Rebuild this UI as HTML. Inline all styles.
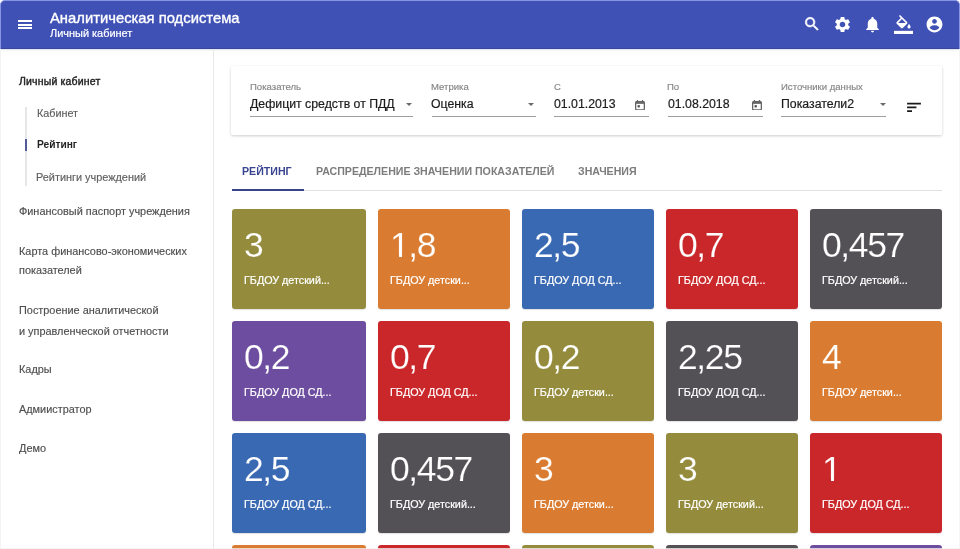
<!DOCTYPE html>
<html><head><meta charset="utf-8"><style>
*{margin:0;padding:0;box-sizing:border-box}
html,body{width:960px;height:549px;overflow:hidden;background:#fff;font-family:"Liberation Sans",sans-serif}
.a{position:absolute;white-space:nowrap;line-height:1;will-change:transform}
#hdr{position:absolute;left:0;top:0;width:960px;height:49px;background:#3f51b5;border:1px solid #8595e2;border-bottom:none;border-radius:5px 5px 0 0;box-shadow:0 1px 0 #e4e6f4,0 2px 2px rgba(0,0,0,.05)}
#hdr:after{content:'';position:absolute;left:0;right:0;bottom:0;height:1px;background:#38479a}
#side{position:absolute;left:0;top:49px;width:213.5px;height:500px;border-right:1px solid #e8e8e8}
.card{position:absolute;height:100px;border-radius:3px;box-shadow:0 1px 1px rgba(0,0,0,.12)}
.ol{background:#948c3c}.or{background:#d97b30}.bl{background:#3a69b3}.rd{background:#c9272a}.gy{background:#535156}.pu{background:#6d4d9f}
#fc{position:absolute;left:231px;top:66px;width:711px;height:69px;background:#fff;border-radius:2px;box-shadow:0 1px 3px rgba(0,0,0,.2)}
.ul{position:absolute;height:1px;background:#9e9e9e}
.arr{position:absolute;width:0;height:0;border-left:3.5px solid transparent;border-right:3.5px solid transparent;border-top:3.5px solid #6a6a6a}
</style></head><body>
<div id="hdr"></div>
<div style="position:absolute;left:18px;top:20px;width:14px;height:2px;background:#fff"></div>
<div style="position:absolute;left:18px;top:23.7px;width:14px;height:2px;background:#fff"></div>
<div style="position:absolute;left:18px;top:27.4px;width:14px;height:2px;background:#fff"></div>
<div class="a" style="left:50.00px;top:11.37px;font-size:14.8px;color:#fff;-webkit-text-stroke:0.35px #fff">Аналитическая подсистема</div>
<div class="a" style="left:50.00px;top:27.93px;font-size:10.95px;color:#fff;-webkit-text-stroke:0.2px #fff">Личный кабинет</div>
<div id="side"></div>
<div style="position:absolute;left:0;top:49px;width:1px;height:500px;background:#f3f3f3"></div><div style="position:absolute;left:959px;top:49px;width:1px;height:500px;background:#f5f5f5"></div>
<div class="a" style="left:18.75px;top:75.76px;font-size:10.5px;color:#222;letter-spacing:0.17px;-webkit-text-stroke:0.4px #222">Личный кабинет</div>
<div class="a" style="left:36.53px;top:107.56px;font-size:10.8px;color:#5e5e5e;-webkit-text-stroke:0.15px #5e5e5e">Кабинет</div>
<div class="a" style="left:36.79px;top:140.27px;font-size:10.2px;color:#222;font-weight:bold;">Рейтинг</div>
<div class="a" style="left:36.03px;top:171.87px;font-size:10.9px;color:#5e5e5e;-webkit-text-stroke:0.15px #5e5e5e">Рейтинги учреждений</div>
<div class="a" style="left:18.75px;top:206.37px;font-size:10.9px;color:#4e4e4e;-webkit-text-stroke:0.15px #4e4e4e">Финансовый паспорт учреждения</div>
<div class="a" style="left:18.75px;top:245.57px;font-size:10.9px;color:#4e4e4e;-webkit-text-stroke:0.15px #4e4e4e">Карта финансово-экономических</div>
<div class="a" style="left:18.75px;top:265.37px;font-size:10.9px;color:#4e4e4e;-webkit-text-stroke:0.15px #4e4e4e">показателей</div>
<div class="a" style="left:18.75px;top:304.77px;font-size:10.9px;color:#4e4e4e;-webkit-text-stroke:0.15px #4e4e4e">Построение аналитической</div>
<div class="a" style="left:18.75px;top:325.77px;font-size:10.9px;color:#4e4e4e;-webkit-text-stroke:0.15px #4e4e4e">и управленческой отчетности</div>
<div class="a" style="left:18.75px;top:364.47px;font-size:10.9px;color:#4e4e4e;-webkit-text-stroke:0.15px #4e4e4e">Кадры</div>
<div class="a" style="left:18.75px;top:403.67px;font-size:10.9px;color:#4e4e4e;-webkit-text-stroke:0.15px #4e4e4e">Адмиистратор</div>
<div class="a" style="left:18.75px;top:442.77px;font-size:10.9px;color:#4e4e4e;-webkit-text-stroke:0.15px #4e4e4e">Демо</div>
<div style="position:absolute;left:25px;top:107px;width:1.6px;height:79px;background:#e6e6e6"></div>
<div style="position:absolute;left:25px;top:139px;width:2px;height:12px;background:#525b98"></div>
<div id="fc"></div>
<div class="a" style="left:249.63px;top:81.72px;font-size:9.55px;color:#858585;-webkit-text-stroke:0.15px #858585">Показатель</div>
<div class="a" style="left:249.93px;top:97.69px;font-size:12.3px;color:#1c1c1c;-webkit-text-stroke:0.2px #1c1c1c">Дефицит средств от ПДД</div>
<div class="ul" style="left:250.3px;top:116px;width:163.2px"></div>
<div class="arr" style="left:406px;top:103px"></div>
<div class="a" style="left:430.83px;top:81.72px;font-size:9.55px;color:#858585;-webkit-text-stroke:0.15px #858585">Метрика</div>
<div class="a" style="left:431.13px;top:97.69px;font-size:12.3px;color:#1c1c1c;-webkit-text-stroke:0.2px #1c1c1c">Оценка</div>
<div class="ul" style="left:431.5px;top:116px;width:104.1px"></div>
<div class="arr" style="left:528px;top:103px"></div>
<div class="a" style="left:553.53px;top:81.72px;font-size:9.55px;color:#858585;-webkit-text-stroke:0.15px #858585">С</div>
<div class="a" style="left:553.83px;top:97.69px;font-size:12.3px;color:#1c1c1c;-webkit-text-stroke:0.2px #1c1c1c">01.01.2013</div>
<div class="ul" style="left:554.2px;top:116px;width:95.0px"></div>
<svg style="position:absolute;left:635px;top:99.5px" width="10" height="10.5" viewBox="0 0 10 10.5"><path d="M2.5 0v2M7.5 0v2" stroke="#666" stroke-width="1.3"/><rect x="0.65" y="1.65" width="8.7" height="8.2" rx="1" fill="none" stroke="#666" stroke-width="1.3"/><rect x="0.65" y="1.65" width="8.7" height="2.2" fill="#666"/><rect x="2.6" y="5.2" width="2.2" height="2.2" fill="#444"/></svg>
<div class="a" style="left:667.23px;top:81.72px;font-size:9.55px;color:#858585;-webkit-text-stroke:0.15px #858585">По</div>
<div class="a" style="left:667.53px;top:97.69px;font-size:12.3px;color:#1c1c1c;-webkit-text-stroke:0.2px #1c1c1c">01.08.2018</div>
<div class="ul" style="left:667.9px;top:116px;width:94.7px"></div>
<svg style="position:absolute;left:752px;top:99.5px" width="10" height="10.5" viewBox="0 0 10 10.5"><path d="M2.5 0v2M7.5 0v2" stroke="#666" stroke-width="1.3"/><rect x="0.65" y="1.65" width="8.7" height="8.2" rx="1" fill="none" stroke="#666" stroke-width="1.3"/><rect x="0.65" y="1.65" width="8.7" height="2.2" fill="#666"/><rect x="2.6" y="5.2" width="2.2" height="2.2" fill="#444"/></svg>
<div class="a" style="left:780.63px;top:81.72px;font-size:9.55px;color:#858585;-webkit-text-stroke:0.15px #858585">Источники данных</div>
<div class="a" style="left:780.93px;top:97.69px;font-size:12.3px;color:#1c1c1c;-webkit-text-stroke:0.2px #1c1c1c">Показатели2</div>
<div class="ul" style="left:781.3px;top:116px;width:105.0px"></div>
<div class="arr" style="left:879.5px;top:103px"></div>
<svg style="position:absolute;left:900px;top:95px" width="30" height="25" viewBox="900 95 30 25"><path d="M907.1 103.7h13.8M907.1 107.4h9.3M907.1 111.2h4.9" stroke="#1a1a1a" stroke-width="1.7"/></svg>
<div class="a" style="left:242.36px;top:166.41px;font-size:10.62px;color:#3a4592;font-weight:bold;">РЕЙТИНГ</div>
<div class="a" style="left:316.16px;top:166.41px;font-size:10.62px;color:#7c7c7c;font-weight:bold;">РАСПРЕДЕЛЕНИЕ ЗНАЧЕНИИ ПОКАЗАТЕЛЕЙ</div>
<div class="a" style="left:577.79px;top:166.41px;font-size:10.62px;color:#7c7c7c;font-weight:bold;">ЗНАЧЕНИЯ</div>
<div style="position:absolute;left:232px;top:190px;width:710px;height:1px;background:#e0e0e0"></div>
<div style="position:absolute;left:232px;top:189px;width:71.5px;height:2px;background:#38438c"></div>
<div class="card ol" style="left:232px;top:209px;width:134px"></div>
<div class="a" style="left:244.13px;top:227.95px;font-size:35.5px;color:#fff;-webkit-text-stroke:0.2px #948c3c;letter-spacing:-1.4px">3</div>
<div class="a" style="left:243.79px;top:274.80px;font-size:10.75px;color:#fff;-webkit-text-stroke:0.2px #fff">ГБДОУ детский...</div>
<div class="card or" style="left:378px;top:209px;width:132px"></div>
<div class="a" style="left:390.13px;top:227.95px;font-size:35.5px;color:#fff;-webkit-text-stroke:0.2px #d97b30;letter-spacing:-1.4px">1,8</div>
<div class="a" style="left:389.79px;top:274.80px;font-size:10.75px;color:#fff;-webkit-text-stroke:0.2px #fff">ГБДОУ детски...</div>
<div style="position:absolute;left:392px;top:254px;width:7px;height:3px;background:#d97b30"></div><div style="position:absolute;left:402px;top:254px;width:7px;height:3px;background:#d97b30"></div>
<div class="card bl" style="left:522px;top:209px;width:132px"></div>
<div class="a" style="left:534.13px;top:227.95px;font-size:35.5px;color:#fff;-webkit-text-stroke:0.2px #3a69b3;letter-spacing:-1.4px">2,5</div>
<div class="a" style="left:533.79px;top:274.80px;font-size:10.75px;color:#fff;-webkit-text-stroke:0.2px #fff">ГБДОУ ДОД СД...</div>
<div class="card rd" style="left:666px;top:209px;width:132px"></div>
<div class="a" style="left:678.13px;top:227.95px;font-size:35.5px;color:#fff;-webkit-text-stroke:0.2px #c9272a;letter-spacing:-1.4px">0,7</div>
<div class="a" style="left:677.79px;top:274.80px;font-size:10.75px;color:#fff;-webkit-text-stroke:0.2px #fff">ГБДОУ ДОД СД...</div>
<div class="card gy" style="left:810px;top:209px;width:132px"></div>
<div class="a" style="left:822.13px;top:227.95px;font-size:35.5px;color:#fff;-webkit-text-stroke:0.2px #535156;letter-spacing:-1.4px">0,457</div>
<div class="a" style="left:821.79px;top:274.80px;font-size:10.75px;color:#fff;-webkit-text-stroke:0.2px #fff">ГБДОУ детский...</div>
<div class="card pu" style="left:232px;top:321px;width:134px"></div>
<div class="a" style="left:244.13px;top:339.95px;font-size:35.5px;color:#fff;-webkit-text-stroke:0.2px #6d4d9f;letter-spacing:-1.4px">0,2</div>
<div class="a" style="left:243.79px;top:386.80px;font-size:10.75px;color:#fff;-webkit-text-stroke:0.2px #fff">ГБДОУ ДОД СД...</div>
<div class="card rd" style="left:378px;top:321px;width:132px"></div>
<div class="a" style="left:390.13px;top:339.95px;font-size:35.5px;color:#fff;-webkit-text-stroke:0.2px #c9272a;letter-spacing:-1.4px">0,7</div>
<div class="a" style="left:389.79px;top:386.80px;font-size:10.75px;color:#fff;-webkit-text-stroke:0.2px #fff">ГБДОУ ДОД СД...</div>
<div class="card ol" style="left:522px;top:321px;width:132px"></div>
<div class="a" style="left:534.13px;top:339.95px;font-size:35.5px;color:#fff;-webkit-text-stroke:0.2px #948c3c;letter-spacing:-1.4px">0,2</div>
<div class="a" style="left:533.79px;top:386.80px;font-size:10.75px;color:#fff;-webkit-text-stroke:0.2px #fff">ГБДОУ детски...</div>
<div class="card gy" style="left:666px;top:321px;width:132px"></div>
<div class="a" style="left:678.13px;top:339.95px;font-size:35.5px;color:#fff;-webkit-text-stroke:0.2px #535156;letter-spacing:-1.4px">2,25</div>
<div class="a" style="left:677.79px;top:386.80px;font-size:10.75px;color:#fff;-webkit-text-stroke:0.2px #fff">ГБДОУ ДОД СД...</div>
<div class="card or" style="left:810px;top:321px;width:132px"></div>
<div class="a" style="left:822.13px;top:339.95px;font-size:35.5px;color:#fff;-webkit-text-stroke:0.2px #d97b30;letter-spacing:-1.4px">4</div>
<div class="a" style="left:821.79px;top:386.80px;font-size:10.75px;color:#fff;-webkit-text-stroke:0.2px #fff">ГБДОУ детски...</div>
<div class="card bl" style="left:232px;top:433px;width:134px"></div>
<div class="a" style="left:244.13px;top:451.95px;font-size:35.5px;color:#fff;-webkit-text-stroke:0.2px #3a69b3;letter-spacing:-1.4px">2,5</div>
<div class="a" style="left:243.79px;top:498.80px;font-size:10.75px;color:#fff;-webkit-text-stroke:0.2px #fff">ГБДОУ ДОД СД...</div>
<div class="card gy" style="left:378px;top:433px;width:132px"></div>
<div class="a" style="left:390.13px;top:451.95px;font-size:35.5px;color:#fff;-webkit-text-stroke:0.2px #535156;letter-spacing:-1.4px">0,457</div>
<div class="a" style="left:389.79px;top:498.80px;font-size:10.75px;color:#fff;-webkit-text-stroke:0.2px #fff">ГБДОУ детский...</div>
<div class="card or" style="left:522px;top:433px;width:132px"></div>
<div class="a" style="left:534.13px;top:451.95px;font-size:35.5px;color:#fff;-webkit-text-stroke:0.2px #d97b30;letter-spacing:-1.4px">3</div>
<div class="a" style="left:533.79px;top:498.80px;font-size:10.75px;color:#fff;-webkit-text-stroke:0.2px #fff">ГБДОУ детски...</div>
<div class="card ol" style="left:666px;top:433px;width:132px"></div>
<div class="a" style="left:678.13px;top:451.95px;font-size:35.5px;color:#fff;-webkit-text-stroke:0.2px #948c3c;letter-spacing:-1.4px">3</div>
<div class="a" style="left:677.79px;top:498.80px;font-size:10.75px;color:#fff;-webkit-text-stroke:0.2px #fff">ГБДОУ детский...</div>
<div class="card rd" style="left:810px;top:433px;width:132px"></div>
<div class="a" style="left:822.13px;top:451.95px;font-size:35.5px;color:#fff;-webkit-text-stroke:0.2px #c9272a;letter-spacing:-1.4px">1</div>
<div class="a" style="left:821.79px;top:498.80px;font-size:10.75px;color:#fff;-webkit-text-stroke:0.2px #fff">ГБДОУ ДОД СД...</div>
<div style="position:absolute;left:824px;top:478px;width:7px;height:3px;background:#c9272a"></div><div style="position:absolute;left:834px;top:478px;width:7px;height:3px;background:#c9272a"></div>
<div class="card or" style="left:232px;top:545px;width:134px"></div>
<div class="card rd" style="left:378px;top:545px;width:132px"></div>
<div class="card ol" style="left:522px;top:545px;width:132px"></div>
<div class="card gy" style="left:666px;top:545px;width:132px"></div>
<div class="card pu" style="left:810px;top:545px;width:132px"></div>

<svg style="position:absolute;left:802.5px;top:15px" width="18" height="18" viewBox="0 0 24 24"><path fill="#fff" stroke="#fff" stroke-width="0.7" d="M15.5 14h-.79l-.28-.27C15.41 12.59 16 11.11 16 9.5 16 5.910 13.090 3 9.5 3S3 5.910 3 9.5 5.910 16 9.5 16c1.610 0 3.090-.59 4.230-1.570l.27.28v.79l5 4.990L20.490 19l-4.990-5zm-6 0C7.010 14 5 11.990 5 9.5S7.010 5 9.5 5 14 7.010 14 9.5 11.990 14 9.5 14z"/></svg>
<svg style="position:absolute;left:833px;top:15px" width="19" height="19" viewBox="0 0 24 24"><path fill="#fff" d="M19.14 12.94c.04-.3.06-.61.06-.94 0-.32-.02-.64-.07-.94l2.03-1.58c.18-.14.23-.41.12-.61l-1.92-3.32c-.12-.22-.37-.29-.59-.22l-2.39.96c-.5-.38-1.030-.7-1.620-.94l-.36-2.540c-.04-.24-.24-.41-.48-.41h-3.840c-.24 0-.43.17-.47.41l-.36 2.540c-.59.24-1.130.57-1.620.94l-2.390-.96c-.22-.08-.47 0-.59.22L2.740 8.870c-.12.21-.08.47.12.61l2.030 1.580c-.05.3-.09.63-.09.94s.02.64.07.94l-2.030 1.580c-.18.14-.23.41-.12.61l1.920 3.320c.12.22.37.29.59.22l2.390-.96c.5.38 1.030.7 1.620.94l.36 2.540c.05.24.24.41.48.41h3.840c.24 0 .44-.17.47-.41l.36-2.540c.59-.24 1.130-.56 1.620-.94l2.390.96c.22.08.47 0 .59-.22l1.920-3.320c.12-.22.07-.47-.12-.61l-2.010-1.580zM12 15.6c-1.980 0-3.6-1.620-3.6-3.6s1.620-3.6 3.6-3.6 3.6 1.620 3.6 3.6-1.620 3.6-3.6 3.6z"/></svg>
<svg style="position:absolute;left:863px;top:15px" width="19" height="19" viewBox="0 0 24 24"><path fill="#fff" d="M12 22c1.1 0 2-.9 2-2h-4c0 1.1.89 2 2 2zm6-6v-5c0-3.070-1.640-5.640-4.5-6.320V4c0-.83-.67-1.5-1.5-1.5s-1.5.67-1.5 1.5v.68C7.630 5.360 6 7.920 6 11v5l-2 2v1h16v-1l-2-2z"/></svg>
<svg style="position:absolute;left:894px;top:15px" width="19" height="19" viewBox="0 0 24 24"><path fill="#fff" d="M16.56 8.94L7.62 0 6.21 1.41l2.38 2.38-5.15 5.15c-.59.59-.59 1.54 0 2.12l5.5 5.5c.29.29.68.44 1.06.44s.77-.15 1.06-.44l5.5-5.5c.59-.58.59-1.53 0-2.12zM5.21 10L10 5.21 14.79 10H5.21zM19 11.5s-2 2.17-2 3.5c0 1.1.9 2 2 2s2-.9 2-2c0-1.33-2-3.5-2-3.5z"/><path fill="#fff" d="M0 20h24v4H0z"/></svg>
<svg style="position:absolute;left:924.5px;top:15px" width="19" height="19" viewBox="0 0 24 24"><path fill="#fff" d="M12 2C6.48 2 2 6.48 2 12s4.48 10 10 10 10-4.48 10-10S17.52 2 12 2zm0 3c1.66 0 3 1.34 3 3s-1.34 3-3 3-3-1.34-3-3 1.34-3 3-3zm0 14.2c-2.5 0-4.71-1.28-6-3.22.03-1.99 4-3.08 6-3.08 1.99 0 5.97 1.09 6 3.08-1.29 1.94-3.5 3.22-6 3.22z"/></svg>

<div style="position:absolute;left:0;top:548px;width:960px;height:1px;background:rgba(240,240,240,.8)"></div>
</body></html>
